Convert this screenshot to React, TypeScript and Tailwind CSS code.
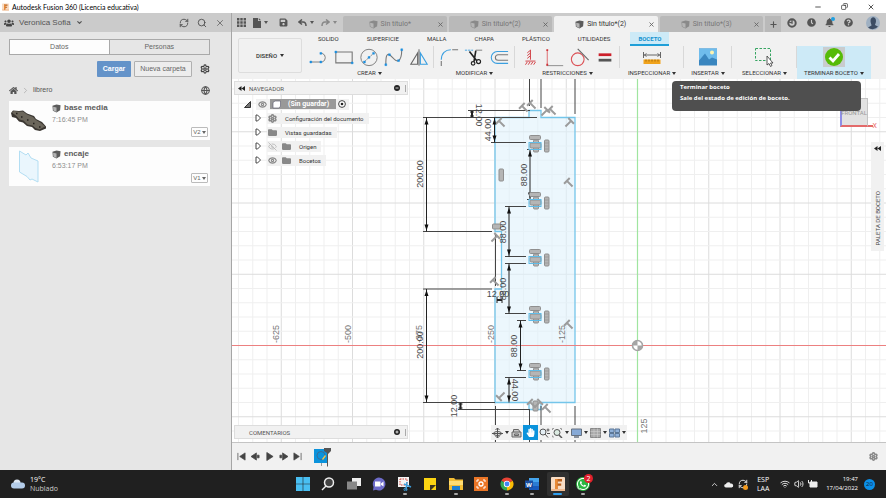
import React from 'react';
import {
  ChevronDown,
  ChevronRight,
  ChevronUp,
  Copy,
  Eye,
  EyeOff,
  Globe,
  Minus,
  Plus,
  RefreshCw,
  Search,
  Settings,
  Volume2,
  Wifi,
  X
} from 'lucide-react';
import {
  FaBell,
  FaClock,
  FaFolder,
  FaHandPaper,
  FaHome,
  FaQuestionCircle,
  FaSave,
  FaUsers,
  FaWhatsapp
} from 'react-icons/fa';

const documents = [
  { name: 'base media', time: '7:16:45 PM', version: 'V2' },
  { name: 'encaje', time: '6:53:17 PM', version: 'V1' }
];

const tabs = [
  { title: 'Sin título*', active: false },
  { title: 'Sin título*(2)', active: false },
  { title: 'Sin título*(2)', active: true },
  { title: 'Sin título*(3)', active: false }
];

const Caret: React.FC<{ className?: string }> = ({ className = 'w-[4px] h-[3px]' }) => (
  <svg viewBox="0 0 4 3" className={`shrink-0 fill-current ${className}`} aria-hidden="true">
    <path d="M0 0h4L2 3z" />
  </svg>
);

const Cube: React.FC<{ className?: string }> = ({ className = '' }) => (
  <svg viewBox="0 0 10 10" className={`w-[9px] h-[9px] shrink-0 ${className}`} aria-hidden="true">
    <path d="M0.500 2 5 0.500 9.500 1.500 9 7 5 9.500 1 7.500z" fill="#5c5c5c" />
    <path d="M1.200 3 5 4v5L1.500 7.200z" fill="#b4b4b4" />
  </svg>
);

const FusionLogo: React.FC<{ className: string }> = ({ className }) => (
  <svg viewBox="0 0 14 14" className={className} aria-hidden="true">
    <rect width="14" height="14" rx="1" fill="#f8dcc4" />
    <path d="M0 12h14v2H1z" fill="#efb98f" />
    <path d="M4 2h7v2.400H6.600v2h3.600v2.300H6.600V12H4z" fill="#b9601c" />
    <path d="M4 2h2.600v10H4z" fill="#e98a36" />
  </svg>
);

const TitleBar: React.FC = () => (
  <header className="flex h-[13px] shrink-0 items-center bg-white pl-[2px] text-black">
    <FusionLogo className="w-[7px] h-[8px]" />
    <h1 className="ml-[3px] flex-1 font-['Lato','Noto_Sans',sans-serif] text-[7px] leading-[10px]">
      Autodesk Fusion 360 (Licencia educativa)
    </h1>
    <div className="flex gap-[19px] pr-[11px]">
      <button aria-label="Minimizar"><Minus size={8} /></button>
      <button aria-label="Restaurar"><Copy size={7} className="-scale-x-100" /></button>
      <button aria-label="Cerrar"><X size={8} /></button>
    </div>
  </header>
);

const thumbs = [
  <svg key="base" viewBox="0 0 39 39" className="h-[39px] w-[39px]" aria-hidden="true">
    <path d="M2 12 4 9.500l6 .5 4-.5 4 3 7 2.500 2 3 6 3 4 4.500v2L31 30l-5-1-3-3-5-1-4-3.500-4-1-3-3.500-4-1z" fill="#3a3631" />
    <path d="M3 11.500 5 10l5 .8 4-.3 4 3 6 2.500 3 3 5 3 4 3.500-5.500 3-4-1.500-3-2.500-5-1-4-4-4-1-3-3.500z" fill="#6b665b" />
    <path d="M7 12.500h1.500M12 16h1.500M18 19h1.500M24 22.500h1.500M30 26h1.500" stroke="#25221f" strokeWidth="1.300" />
  </svg>,
  <svg key="encaje" viewBox="0 0 39 39" className="h-[39px] w-[39px]" aria-hidden="true">
    <path
      d="M10.500 4 17 8l2-2 3 5 7 3v21l-6-3-2 1-3-3.500-7.500-4.500z"
      fill="#eaf6fd"
      stroke="#b3def3"
    />
  </svg>
];

const DataPanel: React.FC = () => (
  <aside className="flex w-[232px] shrink-0 flex-col border-r border-[#a6a6a6] bg-[#e6e6e6] text-[7px] text-[#666]">
    <div className="flex h-[19px] items-center bg-[#cbcbcb] pl-1 pr-[6px] text-[#444]">
      <FaUsers size={10} />
      <button className="ml-[5px] flex items-center gap-[5px] text-[8px] text-[#555]">
        Veronica Sofia <ChevronDown size={7} strokeWidth={4} />
      </button>
      <div className="ml-auto flex gap-[8px]">
        <button aria-label="Actualizar"><RefreshCw size={10} /></button>
        <button aria-label="Buscar"><Search size={10} /></button>
        <button aria-label="Cerrar panel"><X size={10} strokeWidth={1.5} /></button>
      </div>
    </div>

    <div className="pl-[9px] pr-[21px] pt-[7px]">
      <div className="grid h-4 grid-cols-2 border border-[#a9a9a9]">
        <button className="border-r border-[#a9a9a9] bg-[#fdfdfd]">Datos</button>
        <button>Personas</button>
      </div>

      <div className="mt-[6px] flex h-4 items-center justify-end gap-[3px]">
        <button className="h-4 w-[34px] rounded-[1px] bg-[#6493c9] font-bold text-white">Cargar</button>
        <button className="h-4 w-[58px] rounded-[1px] border border-[#b0b0b0] bg-[#ededed]">Nueva carpeta</button>
        <button aria-label="Configuración" className="ml-[5px] text-[#444]"><Settings size={10} strokeWidth={3} /></button>
      </div>

      <nav className="mt-[8px] flex h-[10px] items-center text-[#555]" aria-label="Ruta">
        <a href="#inicio" aria-label="Inicio"><FaHome size={9} /></a>
        <ChevronRight size={9} className="mx-[3px] text-[#aaa]" />
        <a href="#librero">librero</a>
        <Globe size={9} strokeWidth={3} className="ml-auto" />
      </nav>

      <ul className="mt-[6px] flex flex-col gap-[7px]">
        {documents.map((doc, i) => (
          <li key={doc.name} className="flex h-[39px] bg-[#fdfdfd]">
            {thumbs[i]}
            <div className="pl-[4px] pt-[2px]">
              <h2 className="flex items-center gap-[3px] text-[8px] font-bold leading-[10px] text-[#5c5c5c]">
                <Cube /> {doc.name}
              </h2>
              <p className="mt-[2px] leading-[9px] text-[#8e8e8e]">{doc.time}</p>
            </div>
            <button className="mb-[3px] mr-[2px] ml-auto flex h-[10px] w-[17px] items-center justify-center gap-[1px] self-end rounded-[1px] border border-[#bbb] text-[6px]">
              {doc.version} <Caret />
            </button>
          </li>
        ))}
      </ul>
    </div>
  </aside>
);

const TabBar: React.FC = () => (
  <div className="flex h-[19px] shrink-0 bg-[#cbcbcb] font-[Roboto,sans-serif] text-[7px] text-[#555]">
    <div className="flex w-[111px] items-center pl-[5px]">
      <button aria-label="Panel de datos">
        <svg viewBox="0 0 9 9" className="h-[9px] w-[9px]" fill="#555">
          <path d="M0 0h2.400v2.400H0zM3.300 0h2.400v2.400H3.300zM6.600 0H9v2.400H6.600zM0 3.300h2.400v2.400H0zM3.300 3.300h2.400v2.400H3.300zM6.600 3.300H9v2.400H6.600zM0 6.600h2.400V9H0zM3.300 6.600h2.400V9H3.300zM6.600 6.600H9V9H6.600z" />
        </svg>
      </button>
      <button aria-label="Archivo" className="ml-[7px] flex items-center gap-[3px]">
        <svg viewBox="0 0 8 10" className="h-[10px] w-[8px]" fill="#555">
          <path d="M0 0h5v3h3v7H0zM5.800 0 8 2.300H5.800z" />
        </svg>
        <Caret />
      </button>
      <button aria-label="Guardar" className="ml-[11px]"><FaSave size={9} /></button>
      <button aria-label="Deshacer" className="ml-[10px] flex items-center gap-[3px]">
        <svg viewBox="0 0 9 8" className="h-[8px] w-[9px]" fill="none" stroke="#555" strokeWidth="1.500">
          <path d="M4 0.500 1 3l3 2.500M1.500 3H5c2 0 3 1.500 3 4" />
        </svg>
        <Caret />
      </button>
      <button aria-label="Rehacer" className="ml-[7px] flex items-center gap-[3px] text-[#888]">
        <svg viewBox="0 0 9 8" className="h-[8px] w-[9px]" fill="none" stroke="#888" strokeWidth="1.500">
          <path d="M5 0.500 8 3 5 5.500M7.500 3H4C2 3 1 4.500 1 7" />
        </svg>
        <Caret />
      </button>
    </div>

    <div className="flex flex-1 gap-[2px] pt-[3px]" role="tablist">
      {tabs.map((tab, i) => (
        <div
          key={i}
          className={`flex flex-1 items-center rounded-t-[2px] pr-[3px] ${
            tab.active ? 'bg-[#f1f1f1] text-[#333]' : 'bg-[#b9b9b9] text-[#777]'
          }`}
        >
          <button role="tab" aria-selected={tab.active} className="flex flex-1 items-center justify-center gap-[3px]">
            <Cube className={tab.active ? '' : 'opacity-50'} /> {tab.title}
          </button>
          <button aria-label="Cerrar pestaña" className="text-[#666]"><X size={7} strokeWidth={3} /></button>
        </div>
      ))}
    </div>
    <button aria-label="Nueva pestaña" className="ml-[2px] mt-[3px] flex w-[16px] items-center justify-center bg-[#b9b9b9]">
      <Plus size={9} strokeWidth={3} />
    </button>

    <div className="flex w-[105px] items-center justify-between pl-[6px] pr-[6px]">
      <button aria-label="Extensiones">
        <svg viewBox="0 0 10 10" className="h-[10px] w-[10px]" fill="none" stroke="#555" strokeWidth="2">
          <circle cx="5" cy="5" r="3.700" />
          <path d="M5 1v4L2 4" strokeWidth="1.300" />
        </svg>
      </button>
      <button aria-label="Estado del trabajo"><FaClock size={9} /></button>
      <button aria-label="Notificaciones" className="relative">
        <FaBell size={9} />
        <span className="absolute -right-[1px] -top-[1px] h-[4px] w-[4px] rounded-full bg-[#1f9fe0]" />
      </button>
      <button aria-label="Ayuda"><FaQuestionCircle size={9} /></button>
      <button aria-label="Cuenta" className="ml-[4px]">
        <svg viewBox="0 0 14 14" className="h-[14px] w-[14px]">
          <circle cx="7" cy="7" r="7" fill="#9fb0c2" />
          <path d="M4.500 5c0-5 5.500-5 5.500 0 0 2-1 3-1 4l3 1.500A7 7 0 0 1 2 11.500L5.500 9.500C5.500 8 4.500 7 4.500 5z" fill="#3c4c63" />
        </svg>
      </button>
    </div>
  </div>
);

const createIcons = [
  <svg key="line" viewBox="0 0 22 20" className="h-[20px] w-[20px]" fill="none" stroke="#777">
    <path d="M2 15.500h12.500a5 5 0 0 0 0-9.500H13" />
    <path d="M1 14.500h2v2H1zM12 14.500h2v2h-2zM12 5h2v2h-2z" fill="#1b8fe0" stroke="#1b8fe0" strokeWidth="0.500" />
  </svg>,
  <svg key="rect" viewBox="0 0 22 20" className="h-[20px] w-[20px]" fill="none" stroke="#777" strokeWidth="1.200">
    <path d="M2 4.500h18v12H2z" />
    <path d="M1 3.500h2v2H1zM19 15.500h2v2h-2z" fill="#1b8fe0" stroke="#1b8fe0" strokeWidth="0.500" />
  </svg>,
  <svg key="circle" viewBox="0 0 22 20" className="h-[20px] w-[20px]" fill="none" stroke="#777">
    <circle cx="11" cy="10.500" r="9" />
    <path d="M6 15 16 6" strokeDasharray="2 1" />
    <path d="M5 14.500h2v2H5zM10 9.500h2v2h-2zM15 5h2v2h-2z" fill="#1b8fe0" stroke="#1b8fe0" strokeWidth="0.500" />
  </svg>,
  <svg key="spline" viewBox="0 0 22 20" className="h-[20px] w-[20px]" fill="none" stroke="#777" strokeWidth="1.200">
    <path d="M2 18C2 9 3 6 6 7.500S13 16 16 14s3.500-5 3.500-12" />
    <path d="M1 17.500h2v2H1zM5 6.500h2v2H5zM15 13h2v2h-2zM18.500 1h2v2h-2z" fill="#1b8fe0" stroke="#1b8fe0" strokeWidth="0.500" />
  </svg>,
  <svg key="mirror" viewBox="0 0 22 20" className="h-[20px] w-[20px]" fill="none">
    <path d="M9.500 5.500V18H2z" stroke="#666" strokeWidth="1.200" />
    <path d="M12.500 5.500V18H20z" stroke="#3a9fe0" strokeWidth="1.200" />
    <path d="M11 1.500v18" stroke="#555" />
  </svg>
];

const modifyIcons = [
  <svg key="fillet" viewBox="0 0 22 20" className="h-[20px] w-[20px]" fill="none" strokeWidth="1.200">
    <path d="M2.500 13C2.500 6 7 2 13 2" stroke="#3a9fe0" />
    <path d="M2.500 14.500V20M14.500 2H21" stroke="#777" />
  </svg>,
  <svg key="trim" viewBox="0 0 22 20" className="h-[20px] w-[20px]" fill="none" stroke="#222" strokeWidth="1.800">
    <path d="M1 2.500h9" stroke="#3a9fe0" strokeWidth="1" strokeDasharray="2.500 1" />
    <path d="M13 2.500h7" stroke="#777" strokeWidth="1" />
    <path d="m6 4 8 10M13 3l-2 12" />
    <circle cx="10" cy="17" r="2" strokeWidth="1.300" />
    <circle cx="16" cy="15" r="2.200" strokeWidth="1.300" />
  </svg>,
  <svg key="offset" viewBox="0 0 22 20" className="h-[20px] w-[20px]" fill="none" strokeWidth="1.200">
    <path d="M21 4H9a6.500 6.500 0 0 0 0 13h12" stroke="#3a9fe0" />
    <path d="M21 7.500H10a3 3 0 0 0 0 6h11" stroke="#777" />
  </svg>
];

const constraintIcons = [
  <svg key="fix" viewBox="0 0 22 20" className="h-[20px] w-[20px]" fill="none" stroke="#d03238">
    <path d="M11.500 2v11M11 3 8 5.500M11 6 8 8.500M11 9l-3 2.500M6 14.500h11M8 15.500l-2 3M11 15.500l-2 3M14 15.500l-2 3M17 15.500l-2 3" />
  </svg>,
  <svg key="perp" viewBox="0 0 22 20" className="h-[20px] w-[20px]" fill="none">
    <path d="M2.500 2v18" stroke="#e07a7e" strokeWidth="1.200" />
    <path d="M2 19.500h18" stroke="#888" />
    <path d="M1.500 1.500h2v2h-2zM1.500 17.500h2v2h-2z" fill="#d03238" />
  </svg>,
  <svg key="tangent" viewBox="0 0 22 20" className="h-[20px] w-[20px]" fill="none" strokeWidth="1.200">
    <circle cx="8.500" cy="12.500" r="7" stroke="#dc5257" />
    <path d="m8.500 1 12 12.500" stroke="#666" />
  </svg>,
  <svg key="equal" viewBox="0 0 22 20" className="h-[20px] w-[20px]">
    <path d="M4 6h14v3H4z" fill="#cc1f2a" />
    <path d="M4 12h14v3H4z" fill="#555" />
  </svg>
];

const measureIcon = (
  <svg key="measure" viewBox="0 0 20 20" className="h-[20px] w-[20px]" fill="none">
    <path d="M1.500 5v6M18.500 5v6M2 8h16M4.500 6.500 2.500 8l2 1.500M15.500 6.500l2 1.500-2 1.500" stroke="#666" />
    <path d="M1.500 12.500h17V17h-17z" fill="#f0a31c" />
    <path d="M4 12.500v2M7 12.500v2M10 12.500v2M13 12.500v2M16 12.500v2" stroke="#a96c05" />
  </svg>
);

const insertIcon = (
  <svg key="insert" viewBox="0 0 20 20" className="h-[20px] w-[20px]">
    <path d="M1 1.500h18v17H1z" fill="#3a86bf" />
    <path d="M1 1.500h18v11l-5-2-3 2-4-6-6 7z" fill="#6fbcec" />
    <circle cx="14" cy="5.500" r="2" fill="#fdf3b0" />
  </svg>
);

const selectIcon = (
  <svg key="select" viewBox="0 0 20 20" className="h-[20px] w-[20px]">
    <path d="M1.500 1.500h15v12h-15z" fill="none" stroke="#37a562" strokeDasharray="2.500 1.500" />
    <path d="M13 9v9l2-1.500 1.500 3 1.500-1-1.500-2.500H19z" fill="#fff" stroke="#333" strokeWidth="0.800" />
  </svg>
);

const finishIcon = (
  <span key="finish" className="bg-[#c9ccce] px-[1px]">
    <svg viewBox="0 0 20 20" className="h-[20px] w-[20px]">
      <circle cx="10" cy="10" r="9" fill="#56bb08" />
      <path d="m5.500 10.500 3.500 3.500L15 7" fill="none" stroke="#fff" strokeWidth="2.800" />
    </svg>
  </span>
);

const groups = [
  { label: 'CREAR', width: 'w-[129px]', icons: createIcons },
  { label: 'MODIFICAR', width: 'w-[81px]', icons: modifyIcons },
  { label: 'RESTRICCIONES', width: 'w-[105px]', icons: constraintIcons },
  { label: 'INSPECCIONAR', width: 'w-[64px]', icons: [measureIcon] },
  { label: 'INSERTAR', width: 'w-[48px]', icons: [insertIcon] },
  { label: 'SELECCIONAR', width: 'w-[65px]', icons: [selectIcon] },
  { label: 'TERMINAR BOCETO', width: 'w-[74px]', icons: [finishIcon] }
];

const ribbonTabs = ['SOLIDO', 'SUPERFICIE', 'MALLA', 'CHAPA', 'PLÁSTICO', 'UTILIDADES'];

const Ribbon: React.FC = () => (
  <div className="flex h-[47px] shrink-0 bg-[#f1f1f1] font-[Roboto,sans-serif] text-[6px] text-[#333]">
    <button className="ml-[6px] mt-[6px] flex h-[35px] w-[64px] items-center justify-center gap-[3px] rounded-[2px] border border-[#ddd] font-medium">
      DISEÑO <Caret />
    </button>
    <div className="ml-[3px] flex flex-1 flex-col">
      <div className="flex h-[14px] items-stretch gap-[28px] pl-[13px]" role="tablist">
        {ribbonTabs.map((tab) => (
          <button key={tab} role="tab" className="pb-[2px]">{tab}</button>
        ))}
        <button
          role="tab"
          aria-selected="true"
          className="-ml-[8px] w-[39px] border-b-2 border-[#1f9fd8] bg-[#cdeaf7] font-bold text-[#1592cf]"
        >
          BOCETO
        </button>
      </div>
      <div className="flex flex-1">
        {groups.map((group, i) => {
          const last = i === groups.length - 1;
          return (
            <div
              key={group.label}
              className={`flex shrink-0 flex-col items-center ${group.width} ${last ? 'bg-[#cdeaf7]' : ''}`}
            >
              <div
                className={`flex h-[22px] w-full items-center justify-center gap-[5px] ${
                  i < 6 ? 'border-r border-[#d8d8d8]' : ''
                }`}
              >
                {group.icons}
              </div>
              <button className="flex items-center gap-[2px] whitespace-nowrap leading-[10px]">
                {group.label} <Caret />
              </button>
            </div>
          );
        })}
      </div>
    </div>
  </div>
);

const ORIGIN_X = 637.5;
const ORIGIN_Y = 345.5;
const STEP = 14.25;

const gridLines = (origin: number, from: number, to: number) => {
  const lines: { at: number; major: boolean }[] = [];
  for (let n = Math.ceil((from - origin) / STEP); origin + n * STEP <= to; n++) {
    lines.push({ at: origin + n * STEP, major: n % 5 === 0 });
  }
  return lines;
};

const slots = [146, 203, 260, 317, 374];

// perpendicular marks: x, y, rotation
const perpMarks = [
  [501, 123, -45],
  [569, 123, 45],
  [569, 183, -45],
  [524, 108, -45],
  [532, 105, -45],
  [545, 112, 45],
  [552, 111, -45],
  [495, 238, 45],
  [495, 282, -45],
  [501, 396, -135],
  [569, 325, -45],
  [547, 409, -45],
  [532, 404, -45],
  [538, 404, 45]
];

// vertical dimensions: x, top, bottom
const verticalDims = [
  [426.5, 117.5, 231.5],
  [426.5, 289, 402.5],
  [494.5, 117.5, 142.5],
  [530, 149.5, 199.5],
  [509, 206.5, 256.5],
  [509, 263.5, 313.5],
  [520.5, 320.5, 370.5],
  [509, 377.5, 402.5]
];

const dimTexts: [string, number, number, number][] = [
  ['200.00', 423, 174, -90],
  ['200.00', 423, 345, -90],
  ['44.00', 491, 130, -90],
  ['12.00', 476, 115, 90],
  ['88.00', 527, 175, -90],
  ['88.00', 506, 232, -90],
  ['88.00', 506, 289, -90],
  ['88.00', 517, 346, -90],
  ['44.00', 512, 390, 90],
  ['12.00', 457, 406, -90],
  ['12.00', 498, 297, 0]
];

const axisTexts: [string, number, number][] = [
  ['-625', 279, 334],
  ['-500', 351, 334],
  ['-375', 422, 334],
  ['-250', 494, 334],
  ['-125', 565, 334],
  ['125', 647, 426]
];

const SketchView: React.FC = () => (
  <svg
    viewBox="232 79 654 363"
    preserveAspectRatio="xMidYMid slice"
    className="absolute inset-0 h-full w-full font-['Liberation_Sans',sans-serif]"
    aria-label="Boceto"
  >
    {gridLines(ORIGIN_X, 232, 886).map((l) => (
      <path key={l.at} d={`M${l.at} 79V442`} stroke={l.major ? '#dcdcdc' : '#efefef'} />
    ))}
    {gridLines(ORIGIN_Y, 79, 442).map((l) => (
      <path key={l.at} d={`M232 ${l.at}H886`} stroke={l.major ? '#dcdcdc' : '#efefef'} />
    ))}

    <path
      d="M495 117.500H529V110.500H541V117.500H575V402.500H541V409.500H529V402.500H495V289H501.500V231.500H495z"
      fill="#dff1fb"
      fillOpacity="0.600"
      stroke="#74c5ea"
      strokeWidth="1.300"
    />
    <path d="M637.500 79V442" stroke="#a0e5a0" strokeWidth="1.200" />
    <path d="M232 345.500H886" stroke="#ec8080" strokeWidth="1.200" />

    <g fill="#777" fontSize="9" textAnchor="middle">
      {axisTexts.map(([label, x, y]) => (
        <text key={label} transform={`translate(${x} ${y}) rotate(-90)`}>{label}</text>
      ))}
    </g>

    <g stroke="#444" fill="none">
      <path d="M423 117.500H537M423 231.500H492M423 289H492M423 402.500H495M468 110.500H530M491 142.500H526" />
      <path d="M458 409.500H530M527 149.500H541M527 199.500H541M505 206.500H526M505 256.500H526M505 263.500H526" />
      <path d="M505 313.500H526M517 320.500H526M517 370.500H526M505 377.500H526" />
      <path d="M529.500 79V106M541 79V108M575 79V114M495.500 235V286" />
      <path d="M495.500 406V442M529.500 410V442M541 406V442M575 406V442" />
    </g>
    <g stroke="#222" fill="#111">
      {verticalDims.map(([x, top, bottom]) => (
        <g key={`${x}-${top}`}>
          <path d={`M${x} ${top}V${bottom}`} />
          <path d={`M${x} ${top + 1}l2 6h-4zM${x} ${bottom - 1}l2-6h-4z`} stroke="none" />
        </g>
      ))}
      <path d="M472 111v6M460.500 403v6M497 300h5" strokeWidth="2" />
      <path d="M470 112h4M470 116h4M458.500 404h4M458.500 408h4M497 297v6M502 297v6" />
    </g>

    {slots.map((y) => (
      <g key={y}>
        <g fill="#b5b5b5" stroke="#8f8f8f">
          <rect x="529.500" y={y - 10.5} width="11" height="4" rx="1" />
          <rect x="533.500" y={y - 6} width="5" height="12" rx="1" />
          <rect x="530" y={y - 3} width="11" height="5" rx="1" />
          <rect x="544.500" y={y - 6} width="4.500" height="12" rx="1" />
        </g>
        <path d={`M544.500 ${y - 3}h4M544.500 ${y}h4M544.500 ${y + 3}h4`} stroke="#8f8f8f" strokeWidth="0.600" />
        <rect x="529" y={y - 3.5} width="12" height="7" fill="none" stroke="#5fbce8" />
      </g>
    ))}
    <g fill="#b5b5b5" stroke="#8f8f8f">
      <rect x="499" y="169" width="4.500" height="12" rx="1" />
      <rect x="492.500" y="224" width="8" height="5" rx="1" />
      <rect x="533" y="401" width="5" height="10" rx="1" />
    </g>
    <g stroke="#9b9b9b" strokeWidth="2">
      {perpMarks.map(([x, y, angle]) => (
        <path key={`${x}-${y}`} d="M-4-3h8M0-3v8" transform={`translate(${x} ${y}) rotate(${angle})`} />
      ))}
    </g>

    <g fill="#4a4a4a" fontSize="9" textAnchor="middle">
      {dimTexts.map(([label, x, y, angle]) => (
        <text key={`${x}-${y}`} transform={`translate(${x} ${y}) rotate(${angle})`}>{label}</text>
      ))}
    </g>

    <circle cx="637.500" cy="345.500" r="5" fill="#fff" stroke="#a5a5a5" strokeWidth="1.600" />
    <path d="M637.500 345.500v-5a5 5 0 0 0-5 5zM637.500 345.500v5a5 5 0 0 0 5-5z" fill="#a5a5a5" />
  </svg>
);

const Expander: React.FC = () => (
  <svg viewBox="0 0 6 8" className="mr-[6px] h-[8px] w-[6px]" fill="#fff" stroke="#444" aria-hidden="true">
    <path d="M1 1v6h1.500L5.500 4 2.500 1z" />
  </svg>
);

const PanelHeader: React.FC<{ title: string; collapsible?: boolean }> = ({ title, collapsible }) => (
  <div className="flex h-[14px] w-[174px] items-center border border-[#ddd] bg-[#f1f1f1] pl-[3px] pr-[1px] text-[6px] text-[#555]">
    <span className="flex w-[11px]">
      {collapsible && (
        <svg viewBox="0 0 7 5" className="h-[5px] w-[7px]" aria-hidden="true">
          <path d="M3.500 0v5L0 2.500zM7 0v5L3.500 2.500z" fill="#222" />
        </svg>
      )}
    </span>
    <h2 className="flex-1">{title}</h2>
    <button aria-label={`Opciones de ${title}`} className="mr-[4px]">
      <svg viewBox="0 0 6 6" className="h-[6px] w-[6px]">
        <circle cx="3" cy="3" r="3" fill="#222" />
        <path d={collapsible ? 'M1.500 3h3' : 'M1.500 3h3M3 1.500v3'} stroke="#fff" strokeWidth="0.800" />
      </svg>
    </button>
    <span className="h-[7px] w-[2px] border-r border-[#aaa]" />
  </div>
);

const treeRows = [
  { label: 'Configuración del documento', icons: [<Settings key="s" size={9} strokeWidth={4} />] },
  { label: 'Vistas guardadas', icons: [<FaFolder key="f" size={9} />] },
  { label: 'Origen', icons: [<EyeOff key="e" size={9} className="opacity-60" />, <FaFolder key="f" size={9} />] },
  { label: 'Bocetos', icons: [<Eye key="e" size={9} strokeWidth={3} />, <FaFolder key="f" size={9} />] }
];

const Browser: React.FC = () => (
  <section aria-label="Navegador">
    <PanelHeader title="NAVEGADOR" collapsible />
    <ul className="flex flex-col pt-[2px] text-[6px] text-[#333]">
      <li className="flex h-[14px] items-center pl-[10px]">
        <svg viewBox="0 0 7 7" className="h-[7px] w-[7px]" aria-hidden="true">
          <path d="M6.500 0.500v6h-6z" fill="#777" stroke="#333" />
        </svg>
        <span className="ml-[5px] flex h-[11px] items-center bg-[#f1f1f1] pl-[2px] pr-[3px]">
          <Eye size={9} color="#888" strokeWidth={3} />
          <span className="ml-[3px] flex h-[10px] w-[66px] items-center gap-[7px] bg-[#999] pl-[2px] text-[7px] font-bold text-white">
            <svg viewBox="0 0 9 9" className="h-[9px] w-[9px]" aria-hidden="true">
              <path d="M1 2.500 3 1h5.500v5.500l-2 1.500H1z" fill="#fff" stroke="#667" strokeWidth="0.700" />
            </svg>
            (Sin guardar)
          </span>
          <svg viewBox="0 0 8 8" className="ml-[2px] h-[8px] w-[8px]" aria-hidden="true">
            <circle cx="4" cy="4" r="3.400" fill="#fff" stroke="#444" />
            <circle cx="4" cy="4" r="1.300" fill="#222" />
          </svg>
        </span>
      </li>
      {treeRows.map((row) => (
        <li key={row.label} className="flex h-[14px] items-center pl-[21px]">
          <Expander />
          <span className="flex h-[11px] items-center gap-[5px] bg-[#f1f1f1] pl-[1px] pr-[5px]">
            {row.icons.map((icon) => (
              <span key={icon.key} className="text-[#888]">{icon}</span>
            ))}
            <span className="pl-[3px]">{row.label}</span>
          </span>
        </li>
      ))}
    </ul>
  </section>
);

const viewTools = [
  {
    label: 'Órbita',
    menu: true,
    icon: (
      <svg viewBox="0 0 11 10" className="h-[10px] w-[11px]" fill="none" stroke="#555">
        <path d="M5.500 0v10M0 5.500h11M3.500 2l2-2 2 2M3.500 8l2 2 2-2" />
        <ellipse cx="5.500" cy="5.500" rx="4" ry="2" />
      </svg>
    )
  },
  {
    label: 'Mirar a',
    menu: false,
    icon: (
      <svg viewBox="0 0 11 10" className="h-[10px] w-[11px]" fill="#c9c9c9" stroke="#666">
        <path d="M1 4h9v5H1zM2.500 4V1.500h5L9 4M3.500 6h4v1.500h-4z" />
      </svg>
    )
  },
  { label: 'Encuadre', menu: false, icon: <FaHandPaper size={9} color="#fff" /> },
  {
    label: 'Zoom',
    menu: false,
    icon: (
      <svg viewBox="0 0 11 10" className="h-[10px] w-[11px]" fill="none" stroke="#555">
        <circle cx="4" cy="4" r="3" fill="#e4eef4" />
        <path d="m6 6 3 3.500M7.500 2h3M9 0.500v3M8 5.500h3" />
      </svg>
    )
  },
  {
    label: 'Ajustar',
    menu: true,
    icon: (
      <svg viewBox="0 0 11 10" className="h-[10px] w-[11px]" fill="none" stroke="#555">
        <path d="M0.500 2V0.500H2M8 0.500h1.500V2M0.500 7.500V9H2" stroke="#999" />
        <circle cx="5" cy="4.500" r="3" fill="#dcebe2" />
        <path d="m7 7 3 3" strokeWidth="1.500" />
      </svg>
    )
  },
  {
    label: 'Visualización',
    menu: true,
    icon: (
      <svg viewBox="0 0 11 10" className="h-[10px] w-[11px]">
        <path d="M0.500 1h10v6.500h-10z" fill="#86a9d6" stroke="#66717f" />
        <path d="M3 9h5" stroke="#66717f" strokeWidth="1.500" />
      </svg>
    )
  },
  {
    label: 'Rejilla',
    menu: true,
    icon: (
      <svg viewBox="0 0 11 10" className="h-[10px] w-[11px]">
        <path d="M0.500 0.500h10v9h-10z" fill="#a8a8a8" stroke="#888" />
        <path d="M0.500 3.500h10M0.500 6.500h10M4 0.500v9M7.500 0.500v9" stroke="#ccc" strokeWidth="0.600" />
      </svg>
    )
  },
  {
    label: 'Ventanas',
    menu: true,
    icon: (
      <svg viewBox="0 0 11 10" className="h-[10px] w-[11px]" fill="#8fb0d9" stroke="#5c7797">
        <path d="M0.500 1h4.500v3.500H0.500zM6 1h4.500v3.500H6zM0.500 5.500H5V9H0.500zM6 5.500h4.500V9H6z" />
      </svg>
    )
  }
];

const Canvas: React.FC = () => (
  <main className="relative flex min-h-0 flex-1 flex-col overflow-hidden bg-white font-[Roboto,sans-serif]">
    <SketchView />
    <div className="relative flex flex-1 flex-col justify-between pb-[3px] pl-[2px] pt-[2px]">
      <Browser />
      <PanelHeader title="COMENTARIOS" />
    </div>

    <div className="absolute bottom-[2px] left-1/2 flex h-[15px] -translate-x-1/2 items-center bg-[#f1f1f1]">
      {viewTools.map((tool) => (
        <button
          key={tool.label}
          aria-label={tool.label}
          className={`flex h-[15px] items-center gap-[2px] px-[1px] text-[#333] ${
            tool.label === 'Encuadre' ? 'w-[15px] justify-center bg-[#0b93dc]' : ''
          }`}
        >
          {tool.icon}
          {tool.menu ? <Caret /> : null}
        </button>
      ))}
    </div>

    <div className="absolute right-[9px] top-[19px] flex items-end">
      <div className="flex h-[29px] w-[28px] items-center justify-center border border-b-2 border-l-2 border-[#c4c4c4] border-b-[#e36a6a] border-l-[#8f8fe8] bg-[#e2e2e2] text-[6px] text-[#999]">
        FRONTAL
      </div>
      <span className="h-[2px] w-[5px] bg-[#e36a6a]" />
      <span className="-mb-[3px] text-[7px] leading-[8px] text-[#e96a6a]">X</span>
    </div>

    <div className="absolute right-[2px] top-[63px] flex h-[109px] w-[13px] flex-col items-center justify-between bg-[#f1f1f1] pb-[6px] pt-[4px] text-[6px] text-[#444]">
      <svg viewBox="0 0 7 5" className="h-[5px] w-[7px]" aria-hidden="true">
        <path d="M3.500 0v5L0 2.500zM7 0v5L3.500 2.500z" fill="#222" />
      </svg>
      <span className="rotate-180 leading-[8px] [writing-mode:vertical-rl]">PALETA DE BOCETO</span>
    </div>

    <div
      role="tooltip"
      className="absolute right-[25px] top-[2px] h-[30px] w-[189px] rounded-[4px] bg-[#4f4f4f] pl-[8px] pt-[2px] font-['Open_Sans','Noto_Sans',sans-serif] text-[6px] font-bold leading-[8px] text-white"
    >
      <p>Terminar boceto</p>
      <p className="mt-[3px]">Sale del estado de edición de boceto.</p>
    </div>
  </main>
);

const playback = [
  { label: 'Inicio', d: 'M1 1v8M9 1v8L3 5z' },
  { label: 'Anterior', d: 'M6 1v8L0 5zM7 3.500h2v3H7z' },
  { label: 'Reproducir', d: 'M2 0.500v9L9 5z' },
  { label: 'Siguiente', d: 'M4 1v8l6-4zM1 3.500h2v3H1z' },
  { label: 'Final', d: 'M1 1v8l6-4zM9 1v8' }
];

const Timeline: React.FC = () => (
  <footer className="flex h-[28px] shrink-0 items-center border-t border-[#c4c4c4] bg-[#f1f1f1] pl-[5px] pr-[8px]">
    <div className="flex gap-[5px]">
      {playback.map((p) => (
        <button key={p.label} aria-label={p.label}>
          <svg viewBox="0 0 10 10" className="h-[9px] w-[9px]" fill="#444" stroke="#444" strokeWidth="0.800">
            <path d={p.d} />
          </svg>
        </button>
      ))}
    </div>
    <svg viewBox="0 0 18 20" className="ml-[12px] h-[20px] w-[18px]" aria-hidden="true">
      <path d="M0 2h14v14H0z" fill="#0b93dc" />
      <circle cx="7" cy="8.500" r="4" fill="none" stroke="#3d6c96" />
      <path d="m8 12 3-4 1 1-3 4z" fill="#f2c94c" />
      <path d="M10 1h7v3l-3 3v12.500h-1V6l-3-2z" fill="#555" />
      <path d="M7.500 16v3" stroke="#999" />
    </svg>
    <button aria-label="Configuración de la línea de tiempo" className="ml-auto text-[#888]">
      <Settings size={9} strokeWidth={4} />
    </button>
  </footer>
);

const apps = [
  {
    name: 'Inicio',
    icon: <path d="M0 0h6.700v6.700H0zM7.300 0H14v6.700H7.300zM0 7.300h6.700V14H0zM7.300 7.300H14V14H7.300z" fill="#49bff2" />
  },
  {
    name: 'Buscar',
    icon: (
      <g fill="none" stroke="#eee" strokeWidth="1.500">
        <circle cx="8" cy="5.500" r="4.500" fill="#444" />
        <path d="m5 9-4 4" />
      </g>
    )
  },
  {
    name: 'Vista de tareas',
    icon: (
      <g>
        <path d="M5 1h9v8H5z" fill="#eee" />
        <path d="M0 4.500h10v8H0z" fill="#888" />
      </g>
    )
  },
  {
    name: 'Chat',
    icon: (
      <g>
        <path d="M7 0.500a6.500 6.500 0 1 1-3 12.300L1 13.500l.5-3.500A6.500 6.500 0 0 1 7 .5z" fill="#6d6bc9" />
        <path d="M3 4.500h5.500v5H3zM9 6.500l2.500-2v5L9 7.700z" fill="#fff" />
      </g>
    )
  },
  {
    name: 'Recortes',
    running: true,
    icon: (
      <g fill="none">
        <path d="M0 0h11v10H0z" fill="#f4f4f4" />
        <path d="M2 2h7v6H2z" stroke="#d5433b" strokeDasharray="1.500 1" />
        <path d="m6 7 7 3M9 5l-1 8" stroke="#3d9ddb" strokeWidth="1.500" />
        <circle cx="7.500" cy="12.500" r="1.500" stroke="#3d9ddb" />
      </g>
    )
  },
  {
    name: 'Notas',
    icon: (
      <g>
        <path d="M1 1h12v12H1z" fill="#fbd412" />
        <path d="M7 8h6l-5 5H7z" fill="#3b3522" />
      </g>
    )
  },
  {
    name: 'Explorador',
    running: true,
    icon: (
      <g>
        <path d="M0 1h5l1.500 1.500H14V13H0z" fill="#f3bd35" />
        <path d="M0 4h14v4H0z" fill="#ffdc73" />
        <path d="M3 9h8v4H3z" fill="#1f7fd0" />
      </g>
    )
  },
  {
    name: 'Captura',
    icon: (
      <g>
        <path d="M0 0h14v14H0z" fill="#ea7526" />
        <path d="M3 5V3h2M9 3h2v2M3 9v2h2M9 11h2V9" fill="none" stroke="#fff" />
        <circle cx="7" cy="7" r="2" fill="none" stroke="#fff" strokeWidth="1.300" />
      </g>
    )
  },
  {
    name: 'Chrome',
    running: true,
    icon: (
      <g>
        <path d="M7 7 1.370 3.750A6.500 6.500 0 0 1 12.630 3.750z" fill="#ea4335" />
        <path d="M7 7 12.630 3.750A6.500 6.500 0 0 1 7 13.500z" fill="#fbbc05" />
        <path d="M7 7v6.500A6.500 6.500 0 0 1 1.370 3.750z" fill="#34a853" />
        <circle cx="7" cy="7" r="3.200" fill="#fff" />
        <circle cx="7" cy="7" r="2.400" fill="#4285f4" />
      </g>
    )
  },
  {
    name: 'Word',
    running: true,
    icon: (
      <g>
        <path d="M4 1h10v4H4z" fill="#45a5ee" />
        <path d="M4 5h10v4H4z" fill="#2b7cd3" />
        <path d="M4 9h10v4H4z" fill="#185abd" />
        <path d="M0 3.500h8v7.500H0z" fill="#1a4fa3" />
        <text x="4" y="9.500" fontSize="6" fontWeight="700" fill="#fff" textAnchor="middle">W</text>
      </g>
    )
  },
  { name: 'Fusion', running: true, active: true, icon: null },
  { name: 'WhatsApp', running: true, badge: '2', icon: null }
];

const Taskbar: React.FC = () => (
  <footer className="grid h-[28px] shrink-0 grid-cols-[1fr_302px_1fr] items-center bg-[#202020] font-['Open_Sans','Noto_Sans',sans-serif] text-[7px] leading-[9px] text-white">
    <button className="flex items-center gap-[5px] pl-[11px] text-left">
      <svg viewBox="0 0 14 10" className="h-[10px] w-[14px]" aria-hidden="true">
        <circle cx="6" cy="4" r="3.500" fill="#dfe9f5" />
        <rect y="3.500" width="14" height="6" rx="3" fill="#b4cdea" />
      </svg>
      <span>
        <span className="block">19°C</span>
        <span className="block text-[#ccc]">Nublado</span>
      </span>
    </button>

    <div className="flex justify-between">
      {apps.map((app) => (
        <button
          key={app.name}
          aria-label={app.name}
          className={`relative flex h-[24px] w-[22px] flex-col items-center rounded-[2px] pt-[5px] ${
            app.active ? 'bg-[#303030]' : ''
          }`}
        >
          {app.name === 'Fusion' && <FusionLogo className="h-[14px] w-[14px]" />}
          {app.name === 'WhatsApp' && (
            <FaWhatsapp size={14} className="rounded-full bg-[#2bb741]" color="#fff" />
          )}
          {app.icon && <svg viewBox="0 0 14 14" className="h-[14px] w-[14px]">{app.icon}</svg>}
          {app.running && (
            <span
              className={`mt-[2px] h-[2px] rounded-full ${app.active ? 'w-[9px] bg-[#2f9ff0]' : 'w-[4px] bg-[#aaa]'}`}
            />
          )}
          {app.badge && (
            <span className="absolute right-[1px] top-[2px] h-[9px] w-[9px] rounded-full bg-[#e0202c] text-center text-[7px]">
              {app.badge}
            </span>
          )}
        </button>
      ))}
    </div>

    <div className="flex items-center justify-end pr-[11px]">
      <button aria-label="Iconos ocultos"><ChevronUp size={9} /></button>
      <svg viewBox="0 0 10 8" className="ml-[5px] h-[7px] w-[10px]" fill="#eee" aria-label="OneDrive">
        <path d="M1.500 7.500a2 2 0 0 1 0-4A3 3 0 0 1 7 3a2.300 2.300 0 0 1 1 4.500z" />
      </svg>
      <span className="relative ml-[4px]">
        <RefreshCw size={10} />
        <span className="absolute -bottom-[1px] right-0 h-[5px] w-[5px] rounded-full bg-[#f39a1e]" />
      </span>
      <button className="ml-[8px] w-[14px] text-center text-[7px]">ESP LAA</button>
      <button aria-label="Red y sonido" className="ml-[10px] flex items-center gap-[4px]">
        <Wifi size={10} />
        <Volume2 size={10} />
        <svg viewBox="0 0 10 8" className="h-[8px] w-[10px]" aria-hidden="true">
          <path d="M2 2h7v5H2z" fill="#eee" stroke="#eee" />
          <path d="M0.500 0v3h3V0" fill="none" stroke="#eee" />
        </svg>
      </button>
      <button className="ml-[8px] text-right text-[6px]">
        <time>
          <span className="block">19:47</span>
          <span className="block">17/04/2022</span>
        </time>
      </button>
      <span className="ml-[6px] h-[11px] w-[11px] rounded-full bg-[#0b8fe8] text-center text-[6px] leading-[11px] text-[#123]">20</span>
    </div>
  </footer>
);

const App: React.FC = () => (
  <div className="flex min-h-screen flex-col bg-white font-['Liberation_Sans',Arial,sans-serif]">
    <TitleBar />
    <div className="flex flex-1">
      <DataPanel />
      <div className="flex min-w-0 flex-1 flex-col">
        <TabBar />
        <Ribbon />
        <Canvas />
        <Timeline />
      </div>
    </div>
    <Taskbar />
  </div>
);

export default App;
